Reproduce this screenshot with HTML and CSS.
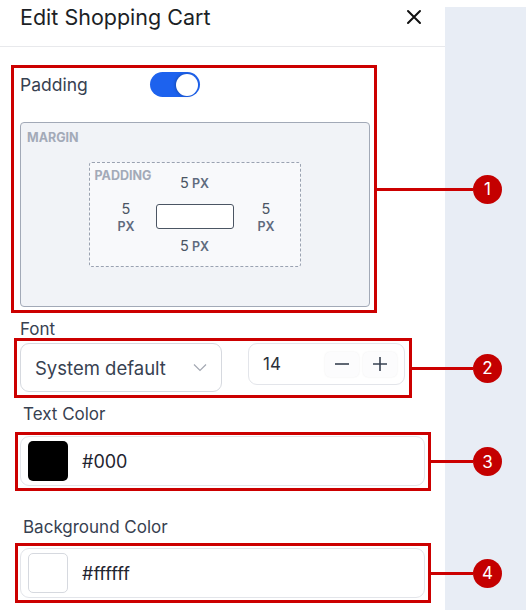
FILE: index.html
```html
<!DOCTYPE html>
<html lang="en">
<head>
  <meta charset="UTF-8">
  <meta name="viewport" content="width=device-width, initial-scale=1.0">
  <title>Edit Shopping Cart</title>
  <link rel="stylesheet" href="styles.css">
</head>
<body>
  <div class="page">
    <aside class="panel">
      <header class="panel-head">
        <h2 class="panel-title">Edit Shopping Cart</h2>
        <button class="close-btn" aria-label="Close">
          <svg width="16" height="16" viewBox="0 0 16 16">
            <path d="M2 2 L14 14 M14 2 L2 14" stroke="#111" stroke-width="2" stroke-linecap="round" fill="none"/>
          </svg>
        </button>
      </header>

      <div class="panel-body">
        <div class="toggle-row">
          <span class="field-label">Padding</span>
          <span class="switch"><span class="knob"></span></span>
        </div>

        <div class="margin-box">
          <span class="box-tag">MARGIN</span>
          <div class="padding-box">
            <span class="box-tag">PADDING</span>
            <span class="val val-top">5<b>PX</b></span>
            <span class="val val-side val-left">5<b>PX</b></span>
            <span class="content-box"></span>
            <span class="val val-side val-right">5<b>PX</b></span>
            <span class="val val-bottom">5<b>PX</b></span>
          </div>
        </div>

        <label class="field-label label-font">Font</label>
        <div class="font-row">
          <div class="select">
            <span>System default</span>
            <svg width="14" height="9" viewBox="0 0 14 9">
              <path d="M1 1.5 L7 7.5 L13 1.5" stroke="#a3a8b2" stroke-width="1.2" fill="none"/>
            </svg>
          </div>
          <div class="number">
            <span class="number-val">14</span>
            <span class="step">
              <svg width="16" height="16" viewBox="0 0 16 16"><path d="M1 8 H15" stroke="#374151" stroke-width="1.6"/></svg>
            </span>
            <span class="step">
              <svg width="16" height="16" viewBox="0 0 16 16"><path d="M1 8 H15 M8 1 V15" stroke="#374151" stroke-width="1.6"/></svg>
            </span>
          </div>
        </div>

        <label class="field-label label-text">Text Color</label>
        <div class="color-input">
          <span class="swatch swatch-black"></span>
          <span class="color-val">#000</span>
        </div>

        <label class="field-label label-bg">Background Color</label>
        <div class="color-input">
          <span class="swatch swatch-white"></span>
          <span class="color-val">#ffffff</span>
        </div>
      </div>
    </aside>

    <div class="backdrop"></div>

    <!-- annotation callouts -->
    <div class="callout callout-1"><span class="leader"><span class="badge">1</span></span></div>
    <div class="callout callout-2"><span class="leader"><span class="badge">2</span></span></div>
    <div class="callout callout-3"><span class="leader"><span class="badge">3</span></span></div>
    <div class="callout callout-4"><span class="leader"><span class="badge">4</span></span></div>
  </div>
</body>
</html>
```

FILE: styles.css
```css
body {
  margin: 0;
  padding: 0;
  font-family: Inter, "Noto Sans", sans-serif;
  background: #fff;
}

.page {
  position: relative;
  display: flex;
  width: 526px;
  height: 610px;
  overflow: hidden;
}

.panel {
  width: 445px;
  flex: none;
  background: #fff;
}

.backdrop {
  flex: 1;
  margin-top: 7px;
  background: #e8edf5;
}

/* header */
.panel-head {
  display: flex;
  align-items: center;
  justify-content: space-between;
  height: 47px;
  box-sizing: border-box;
  padding: 0 23px 12px 20px;
  border-bottom: 1px solid #e8e9ec;
}

.panel-title {
  margin: 0;
  font-size: 21.5px;
  font-weight: 400;
  color: #1c1f26;
}

.close-btn {
  border: 0;
  background: none;
  padding: 0;
  display: flex;
}

/* body */
.panel-body {
  padding: 25px 20px 0;
  display: flex;
  flex-direction: column;
  align-items: flex-start;
}

.field-label {
  font-size: 17px;
  line-height: 20px;
  color: #374151;
}

.toggle-row {
  display: flex;
  align-items: center;
  height: 25px;
}

.toggle-row .field-label {
  width: 130px;
  font-size: 17.5px;
}

.switch {
  width: 50px;
  height: 25px;
  border-radius: 13px;
  background: #1d62ee;
  display: flex;
  align-items: center;
  justify-content: flex-end;
  padding: 0 2px;
  box-sizing: border-box;
}

.knob {
  width: 22px;
  height: 22px;
  border-radius: 50%;
  background: #fff;
  box-shadow: -1px 0 3px rgba(0, 0, 0, 0.25);
}

/* margin / padding diagram */
.margin-box {
  margin-top: 25px;
  width: 350px;
  height: 185px;
  box-sizing: border-box;
  padding: 8px 6px 0;
  background: #f1f3f7;
  border: 1px solid #a2a9b7;
  border-radius: 4px;
  display: flex;
  flex-direction: column;
}

.box-tag {
  font-size: 12.5px;
  line-height: 13px;
  font-weight: 700;
  color: #a3aab8;
}

.padding-box {
  align-self: center;
  margin-top: 18px;
  width: 212px;
  height: 105px;
  box-sizing: border-box;
  padding: 6px 5px 0;
  background: #f8f9fb;
  border: 1px dashed #9aa2b1;
  border-radius: 3px;
  display: grid;
  grid-template-columns: 1fr 78px 1fr;
  grid-template-rows: 24px 46px 14px;
  margin-left: -1px;
}

.padding-box .box-tag {
  grid-column: 1;
  grid-row: 1;
  align-self: start;
}

.val {
  font-size: 14.5px;
  line-height: 14px;
  color: #4b5563;
  justify-self: center;
  align-self: center;
  display: flex;
  align-items: baseline;
  gap: 3px;
}

.val b {
  font-size: 12.5px;
  font-weight: 600;
  color: #5f6b7e;
}

.val-top {
  grid-column: 2;
  grid-row: 1;
  margin-top: 4px;
}

.val-bottom {
  grid-column: 2;
  grid-row: 3;
}

.val-side {
  grid-row: 2;
  flex-direction: column;
  align-items: center;
  gap: 4px;
  margin-top: 4px;
}

.val-left {
  grid-column: 1;
  margin-left: 2px;
}

.val-right {
  grid-column: 3;
  margin-right: -4px;
}

.content-box {
  grid-column: 2;
  grid-row: 2;
  align-self: center;
  height: 25px;
  background: #fff;
  border: 1px solid #4b5563;
  border-radius: 3px;
  box-sizing: border-box;
}

/* font row */
.label-font {
  margin-top: 12px;
}

.font-row {
  margin-top: 4px;
  display: flex;
  align-items: flex-start;
  gap: 26px;
}

.select {
  width: 202px;
  height: 49px;
  box-sizing: border-box;
  border: 1px solid #d6d9df;
  border-radius: 9px;
  display: flex;
  align-items: center;
  justify-content: space-between;
  padding: 0 14px 0 14px;
  font-size: 18.5px;
  color: #374151;
}

.number {
  width: 157px;
  height: 42px;
  box-sizing: border-box;
  border: 1px solid #e3e5ea;
  border-radius: 9px;
  display: flex;
  align-items: center;
  padding: 0 7px 0 14px;
  gap: 4px;
}

.number-val {
  flex: 1;
  font-size: 17px;
  color: #2b2f38;
}

.step {
  width: 34px;
  height: 25px;
  border-radius: 5px;
  background: #fcfcfd;
  box-shadow: 0 0 2px rgba(0, 0, 0, 0.08);
  display: flex;
  align-items: center;
  justify-content: center;
}

/* color inputs */
.label-text {
  margin-top: 12px;
  padding-left: 3px;
}

.label-bg {
  margin-top: 31px;
  padding-left: 3px;
}

.color-input {
  margin-top: 12px;
  width: 405px;
  height: 50px;
  box-sizing: border-box;
  border: 1px solid #e3e5ea;
  border-radius: 9px;
  display: flex;
  align-items: center;
  padding-left: 7px;
  gap: 14px;
}

.label-bg + .color-input {
  margin-top: 11px;
}

.swatch {
  width: 40px;
  height: 40px;
  box-sizing: border-box;
  border-radius: 5px;
}

.swatch-black {
  background: #000;
}

.swatch-white {
  background: #fff;
  border: 1px solid #d6d9df;
}

.color-val {
  font-size: 18px;
  color: #1f2430;
}

/* annotation callouts */
.callout {
  position: absolute;
  border: 3px solid #cc0000;
  box-sizing: border-box;
}

.leader {
  position: absolute;
  left: 100%;
  top: 50%;
  height: 3px;
  margin-top: -1.5px;
  background: #cc0000;
}

.badge {
  position: absolute;
  left: 100%;
  top: 50%;
  width: 29px;
  height: 29px;
  margin-top: -14.5px;
  border-radius: 50%;
  background: #c40000;
  color: #fff;
  font-size: 17px;
  display: flex;
  align-items: center;
  justify-content: center;
}

.callout-1 { left: 11px; top: 65px; width: 366px; height: 248px; }
.callout-1 .leader { width: 99px; }

.callout-2 { left: 14px; top: 338px; width: 398px; height: 60px; }
.callout-2 .leader { width: 64px; }

.callout-3 { left: 15px; top: 432px; width: 416px; height: 59px; }
.callout-3 .leader { width: 45px; }

.callout-4 { left: 15px; top: 543px; width: 416px; height: 60px; }
.callout-4 .leader { width: 45px; }
```
